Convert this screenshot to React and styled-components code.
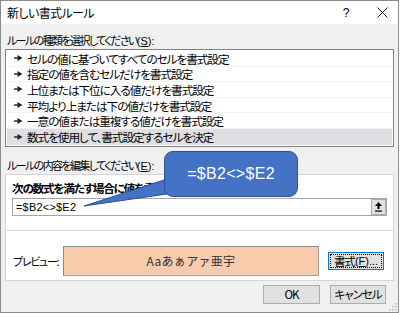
import React from "react";
import styled, { createGlobalStyle } from "styled-components";

const GlobalStyle = createGlobalStyle`
  html, body { margin: 0; padding: 0; background: #ffffff; }
  body {
    font-family: "Noto Sans CJK JP", "Noto Sans", sans-serif;
    font-size: 12px;
    color: #000;
  }
`;

const jp = (spacing = -1, size = 12) => `
  font-family: "Noto Sans CJK JP", sans-serif;
  font-feature-settings: "palt";
  font-size: ${size}px;
  letter-spacing: ${spacing}px;
  white-space: nowrap;
`;

const Window = styled.div`
  position: relative;
  width: 399px;
  height: 313px;
  box-sizing: border-box;
  border: 1px solid #8c8c8c;
  background: #f0f0f0;
  display: flex;
  flex-direction: column;
  overflow: hidden;
`;

const TitleBar = styled.div`
  height: 23px;
  background: #ffffff;
  display: flex;
  align-items: center;
  padding-left: 6px;
  flex-shrink: 0;
`;

const Title = styled.span`
  ${jp(-0.6)}
  flex: 1;
`;

const TitleButton = styled.div`
  width: ${p => p.$w}px;
  height: 23px;
  display: flex;
  align-items: center;
  justify-content: center;
  font-family: "Liberation Sans", sans-serif;
  font-size: 12px;
`;

const Body = styled.div`
  padding: 0 4px;
  display: flex;
  flex-direction: column;
`;

const Label = styled.div`
  ${jp(-1.6, 11)}
  line-height: 16px;
  height: 16px;
  padding-left: 2px;
  margin-top: ${p => p.$top}px;
`;

const Key = styled.span`
  letter-spacing: 0;
  font-family: "Liberation Sans", sans-serif;
  font-size: 11px;
`;

const ListBox = styled.div`
  margin-top: 1px;
  border: 1px solid #7f7f7f;
  background: #ffffff;
  padding: 1px;
  width: 389px;
  box-sizing: border-box;
`;

const Row = styled.div`
  height: 15.6px;
  display: flex;
  align-items: center;
  padding-left: 7px;
  gap: 4px;
  background: ${p => (p.$selected ? "#dedee3" : "transparent")};
  border-bottom: ${p => (p.$selected ? "none" : "1px solid #f2f2f2")};
  box-sizing: border-box;
  ${jp(-1.1, 11.7)}
  line-height: 15px;
`;

const Panel = styled.div`
  margin-top: 1px;
  width: 389px;
  box-sizing: border-box;
  border: 1px solid #d5d5d5;
  background: #ffffff;
`;

const EditSection = styled.div`
  padding: 5px 6px 14px 6px;
  border-bottom: 1px solid #d9d9d9;
`;

const BoldText = styled.div`
  ${jp(-1.3, 11.7)}
  font-weight: bold;
  line-height: 16px;
`;

const InputBox = styled.div`
  margin-top: 2px;
  height: 18px;
  box-sizing: border-box;
  border: 1px solid #a5a5a5;
  display: flex;
  align-items: center;
  padding-left: 3px;
`;

const InputText = styled.span`
  flex: 1;
  font-family: "Liberation Sans", sans-serif;
  font-size: 11px;
  letter-spacing: 0.2px;
`;

const RefButton = styled.div`
  width: 15px;
  height: 16px;
  box-sizing: border-box;
  background: #e1e1e1;
  border: 1px solid #adadad;
  display: flex;
  align-items: center;
  justify-content: center;
`;

const PreviewSection = styled.div`
  padding: 15px 8px 4px 7px;
  display: flex;
  align-items: center;
  gap: 9px;
`;

const PreviewLabel = styled.span`
  ${jp(-1.3, 11)}
  width: 41px;
  flex-shrink: 0;
`;

const PreviewBox = styled.div`
  width: 256px;
  height: 30px;
  box-sizing: border-box;
  border: 1px solid #a0a0a0;
  border-top-color: #8a8a8a;
  border-left-color: #8a8a8a;
  background: #f8cbad;
  display: flex;
  align-items: center;
  justify-content: center;
  font-family: "Noto Sans CJK JP", sans-serif;
  font-size: 12px;
  color: #333;
  letter-spacing: 0.3px;
`;

const Button = styled.div`
  width: ${p => p.$w}px;
  height: ${p => p.$h || 19}px;
  box-sizing: border-box;
  background: #e1e1e1;
  border: 1px solid ${p => (p.$focus ? "#0078d7" : "#adadad")};
  display: flex;
  align-items: center;
  justify-content: center;
  ${jp(-1, 11.5)}
  padding: ${p => (p.$focus ? "1px" : "0")};
`;

const FocusRing = styled.div`
  flex: 1;
  align-self: stretch;
  border: 1px dotted #000;
  display: flex;
  align-items: center;
  justify-content: center;
`;

const Footer = styled.div`
  display: flex;
  justify-content: flex-end;
  gap: 10px;
  padding: 4px 8px 0 0;
`;

const Callout = styled.div`
  position: absolute;
  left: 163px;
  top: 150px;
  width: 134px;
  height: 46px;
  box-sizing: border-box;
  background: #4472c4;
  border: 1px solid #2f528f;
  border-radius: 9px;
  display: flex;
  align-items: center;
  justify-content: center;
  color: #ffffff;
  font-family: "Liberation Sans", sans-serif;
  font-size: 16px;
  letter-spacing: 0.3px;
`;

const Tail = styled.svg`
  position: absolute;
  left: 0;
  top: 0;
  pointer-events: none;
`;

const Grip = styled.svg`
  position: absolute;
  right: 1px;
  bottom: 1px;
`;

const Pointer = () => (
  <svg width="9" height="6" viewBox="0 0 9 6">
    <rect x="0" y="2.3" width="5" height="1.4" fill="#222" />
    <polygon points="3.5,0 8.5,3 3.5,6" fill="#222" />
  </svg>
);

const rules = [
  "セルの値に基づいてすべてのセルを書式設定",
  "指定の値を含むセルだけを書式設定",
  "上位または下位に入る値だけを書式設定",
  "平均より上または下の値だけを書式設定",
  "一意の値または重複する値だけを書式設定",
  "数式を使用して、書式設定するセルを決定",
];

const U = styled.span`
  text-decoration: underline;
`;

export default function App() {
  return (
    <>
      <GlobalStyle />
      <Window>
        <TitleBar>
          <Title>新しい書式ルール</Title>
          <TitleButton $w={40}>?</TitleButton>
          <TitleButton $w={32}>
            <svg width="11" height="11" viewBox="0 0 11 11">
              <path d="M0.5 0.5 L10.5 10.5 M10.5 0.5 L0.5 10.5" stroke="#222" strokeWidth="1" />
            </svg>
          </TitleButton>
        </TitleBar>
        <Body>
          <Label $top={8}>
            ルールの種類を選択してください<Key>(<U>S</U>):</Key>
          </Label>
          <ListBox>
            {rules.map((r, i) => (
              <Row key={r} $selected={i === rules.length - 1}>
                <Pointer />
                {r}
              </Row>
            ))}
          </ListBox>
          <Label $top={10}>
            ルールの内容を編集してください<Key>(<U>E</U>):</Key>
          </Label>
          <Panel>
            <EditSection>
              <BoldText>次の数式を満たす場合に値を書式設定(O):</BoldText>
              <InputBox>
                <InputText>=$B2&lt;&gt;$E2</InputText>
                <RefButton>
                  <svg width="9" height="10" viewBox="0 0 9 10">
                    <polygon points="4.5,0 8,4 5.5,4 5.5,7 3.5,7 3.5,4 1,4" fill="#000" />
                    <rect x="1" y="8.5" width="7" height="1.2" fill="#000" />
                  </svg>
                </RefButton>
              </InputBox>
            </EditSection>
            <PreviewSection>
              <PreviewLabel>プレビュー:</PreviewLabel>
              <PreviewBox>Aaあぁアァ亜宇</PreviewBox>
              <Button $w={56} $h={18} $focus>
                <FocusRing>
                  書式<Key>(<U>F</U>)...</Key>
                </FocusRing>
              </Button>
            </PreviewSection>
          </Panel>
          <Footer>
            <Button $w={57}>OK</Button>
            <Button $w={56}>キャンセル</Button>
          </Footer>
        </Body>
        <Tail width="400" height="313">
          <polygon points="83,205 166,178 166,193" fill="#4472c4" stroke="#2f528f" strokeWidth="1" />
        </Tail>
        <Callout>=$B2&lt;&gt;$E2</Callout>
        <Grip width="8" height="8" viewBox="0 0 8 8">
          {[[6, 0], [6, 3], [3, 3], [6, 6], [3, 6], [0, 6]].map(([x, y]) => (
            <rect key={`${x}-${y}`} x={x} y={y} width="1.5" height="1.5" fill="#b8b8b8" />
          ))}
        </Grip>
      </Window>
    </>
  );
}
